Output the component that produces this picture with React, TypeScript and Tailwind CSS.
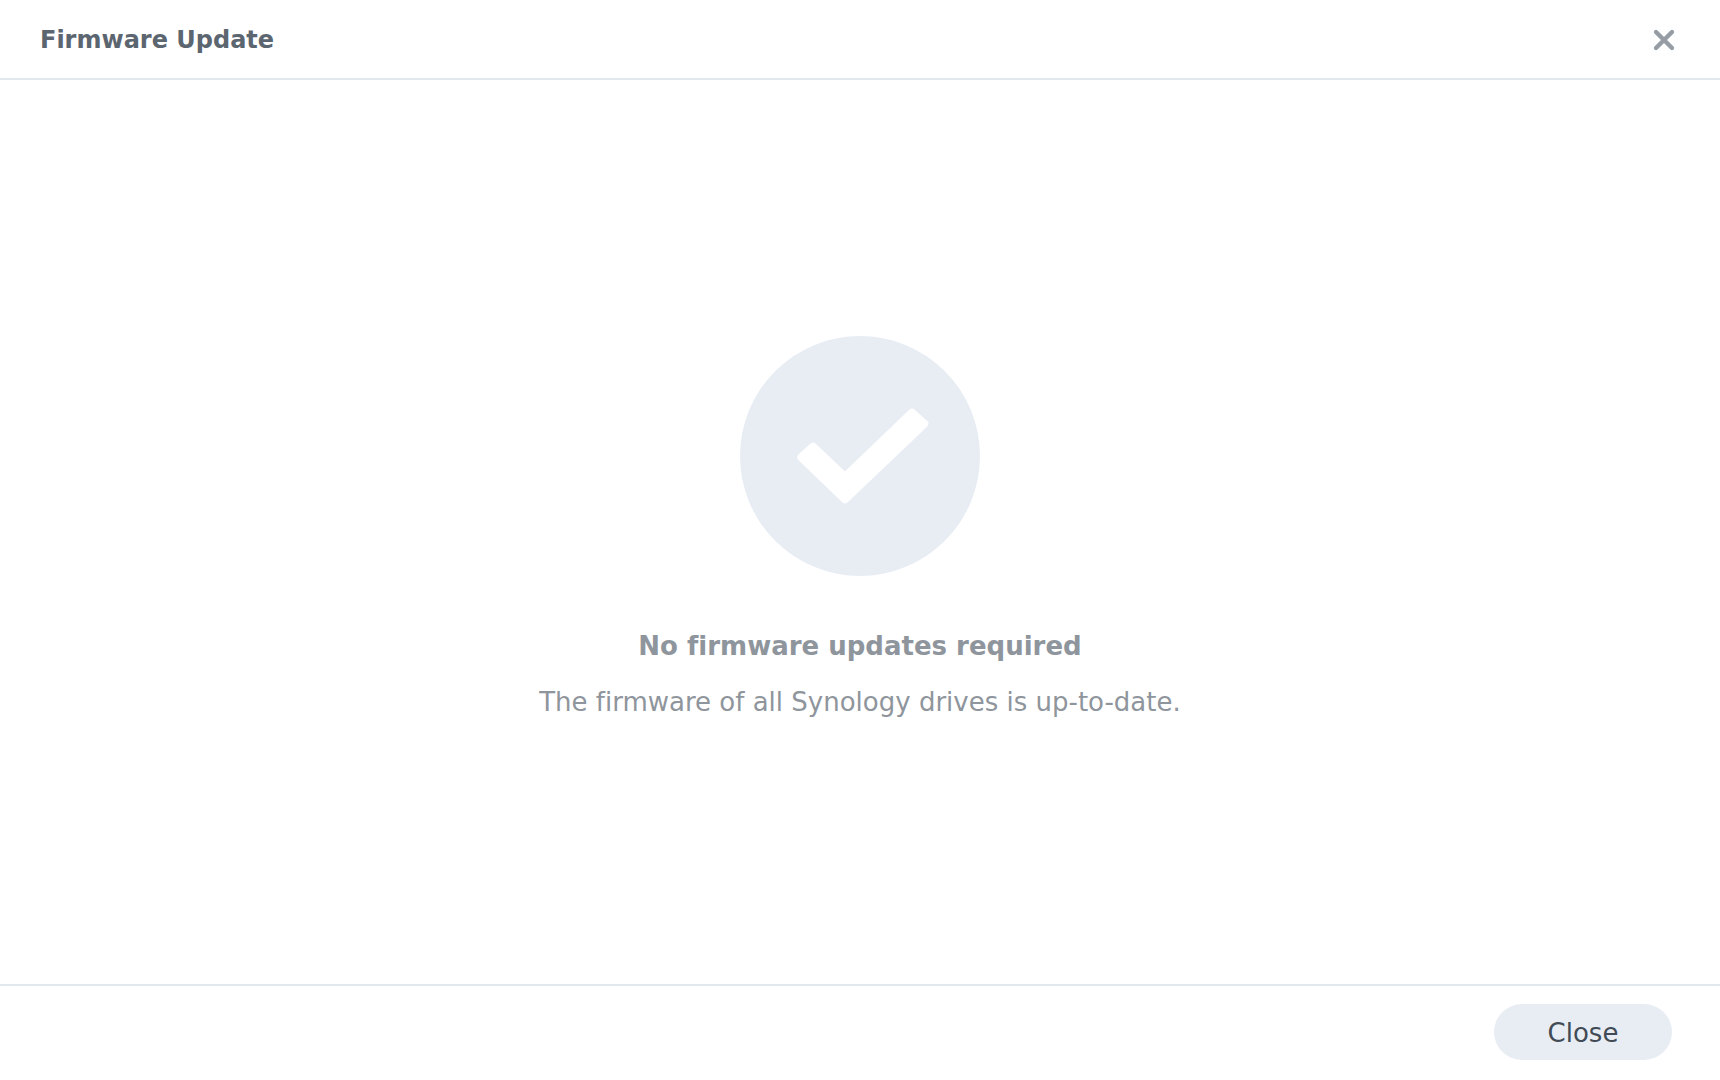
import React, { useState } from 'react';

const CheckBadge: React.FC = () => (
  <svg width="240" height="240" viewBox="0 0 240 240" aria-hidden="true">
    <circle cx="120" cy="120" r="120" fill="#e8edf4" />
    <path
      d="M61.3 121.3 L73 110.6 L105 140.8 L172 76.6 L184.3 87.8 L105 163.3 Z"
      fill="#ffffff"
      stroke="#ffffff"
      strokeWidth="8"
      strokeLinejoin="round"
    />
  </svg>
);

const CloseIcon: React.FC = () => (
  <svg width="24" height="24" viewBox="0 0 24 24" aria-hidden="true">
    <path d="M4 4 L20 20 M20 4 L4 20" stroke="#969da4" strokeWidth="4.4" strokeLinecap="round" />
  </svg>
);

export default function App() {
  const [open, setOpen] = useState(true);

  if (!open) return null;

  return (
    <div
      role="dialog"
      aria-labelledby="dialog-title"
      className="flex min-h-screen flex-col bg-white font-['Verdana','DejaVu_Sans',sans-serif] [font-variant-ligatures:none]"
    >
      {/* Title bar */}
      <header className="flex h-20 items-center justify-between border-b-2 border-[#e2e8ed] pt-0.5 pl-10 pr-11">
        <h1 id="dialog-title" className="text-2xl font-bold text-[#5c6670]">Firmware Update</h1>
        <button type="button" aria-label="Close dialog" onClick={() => setOpen(false)}>
          <CloseIcon />
        </button>
      </header>

      {/* Status */}
      <main className="flex flex-1 flex-col items-center justify-center pb-1.5">
        <CheckBadge />
        <h2 className="mt-[50px] text-[26px] leading-10 font-bold text-[#8f959c]">No firmware updates required</h2>
        <p className="mt-4 text-[26px] leading-10 text-[#8f959c]">
          The firmware of all Synology drives is up-to-date.
        </p>
      </main>

      {/* Actions */}
      <footer className="flex justify-end border-t-2 border-[#e2e8ed] px-12 pt-[18px] pb-5">
        <button
          type="button"
          onClick={() => setOpen(false)}
          className="h-14 w-[178px] rounded-full bg-[#e8edf4] pt-0.5 text-[26px] text-[#414b55]"
        >
          Close
        </button>
      </footer>
    </div>
  );
}
